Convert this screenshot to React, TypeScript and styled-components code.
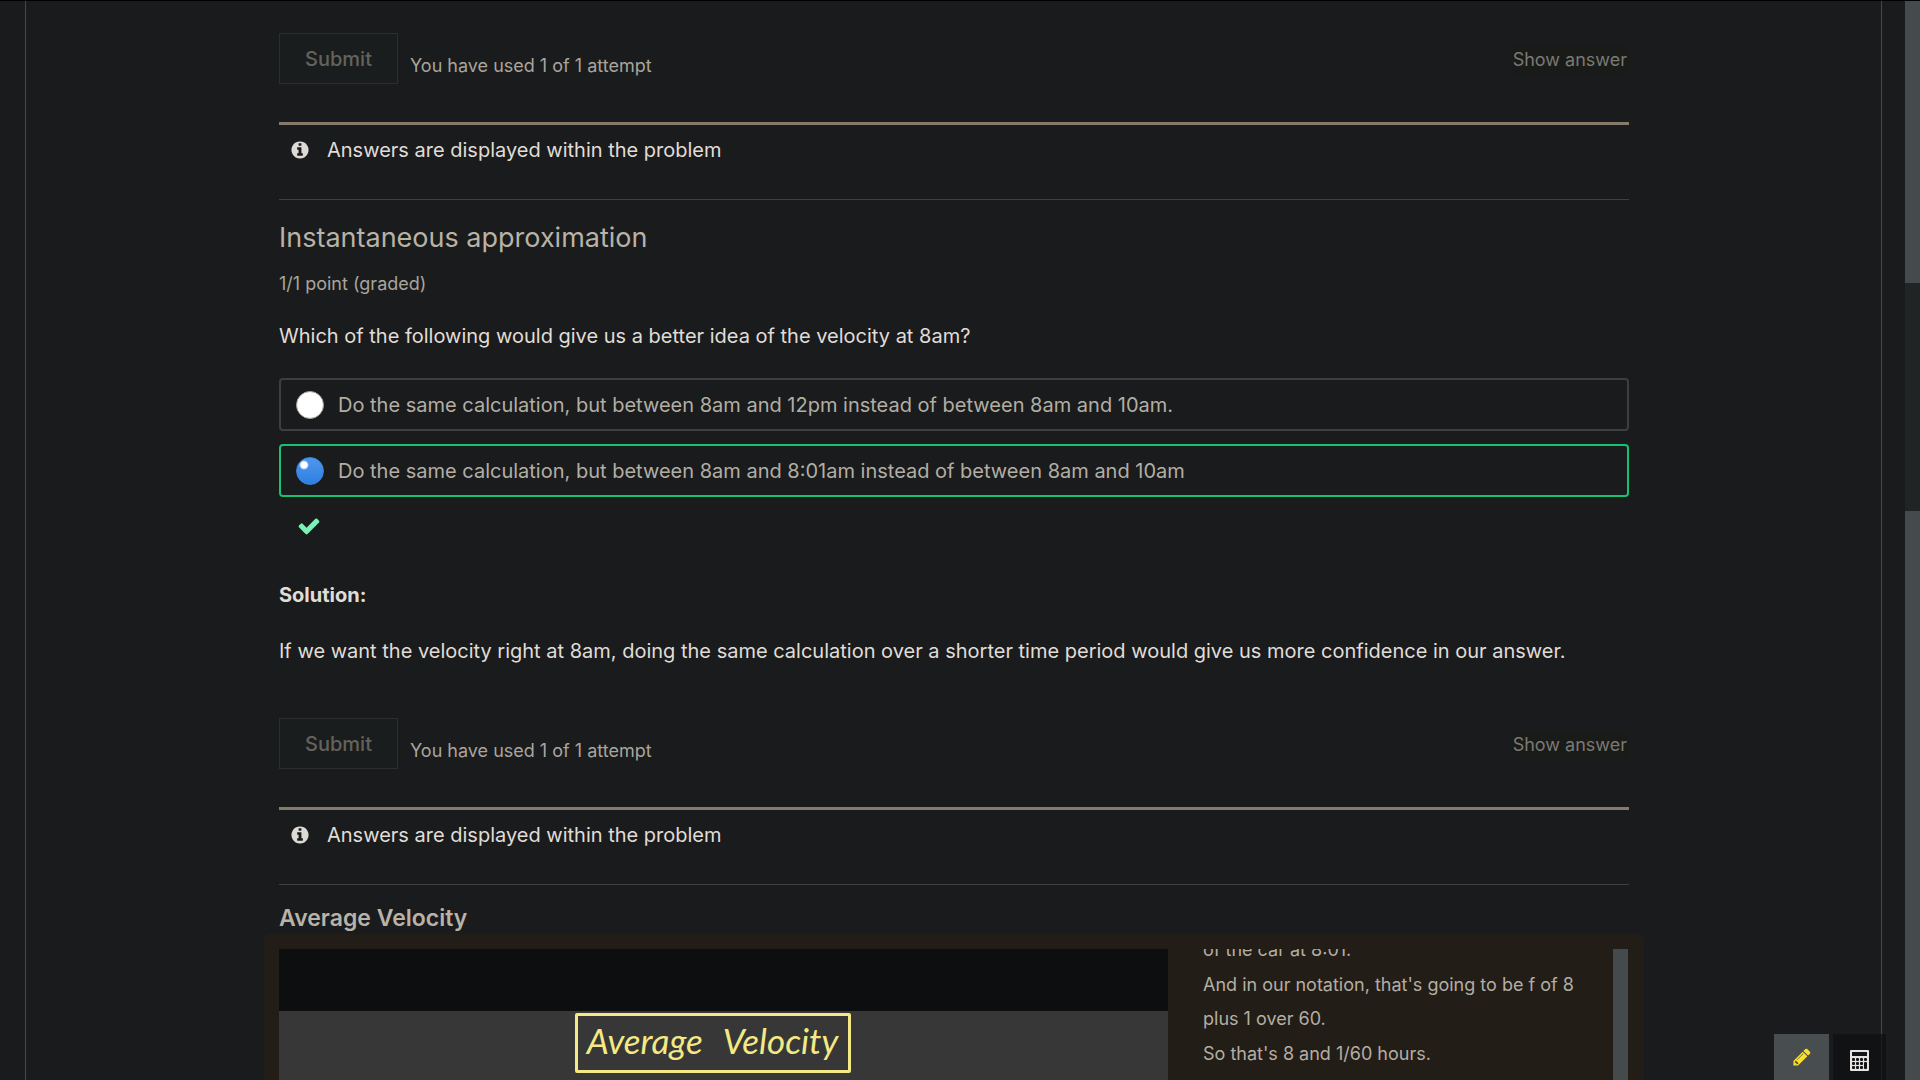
import React from "react";
import styled, { createGlobalStyle } from "styled-components";

const GlobalStyle = createGlobalStyle`
  * { box-sizing: border-box; }
  body {
    margin: 0;
    background: #1a1b1c;
    color: #e0ddd8;
    font-family: Inter, "Open Sans", sans-serif;
    font-size: 20px;
    line-height: 28px;
  }
  h2, h3, p, ul { margin: 0; padding: 0; }
  button { font-family: inherit; }
`;

const Window = styled.div`
  display: grid;
  grid-template-columns: 1fr 15px;
  height: 100vh;
  overflow: hidden;
  border-top: 1px solid #000;
`;

const Page = styled.div`
  min-height: 0;
  padding: 0 23px 0 25px;
`;

const Frame = styled.main`
  height: 100%;
  overflow: hidden;
  padding: 32px 252px 0 253px;
  border: solid #46494b;
  border-width: 0 1px;
`;

const Track = styled.div`
  display: flex;
  flex-direction: column;
  background: #454a4d;
`;

const TrackSpace = styled.div<{ $grow: number }>`
  flex: ${(p) => p.$grow} 1 0;
`;

const Thumb = styled.div`
  flex: 228 1 0;
  background: #202424;
`;

const Actions = styled.div`
  display: flex;
  align-items: flex-start;
  height: 51px;
`;

const Submit = styled.button`
  width: 119px;
  height: 51px;
  border: 1px solid #292e30;
  background: #1a1d1e;
  color: #65625c;
  font-size: 20px;
  font-weight: 500;
  line-height: 28px;
  padding: 0;
`;

const Attempts = styled.span`
  margin: 21px auto 0 12px;
  color: #a9a59d;
  font-size: 18px;
  line-height: 24px;
`;

const ShowAnswer = styled.button`
  margin-top: 13px;
  border: 0;
  padding: 0 2px;
  background: #191b19;
  color: #7b7974;
  font-size: 18px;
  font-weight: 400;
  line-height: 28px;
`;

const Notice = styled.div`
  display: flex;
  align-items: center;
  gap: 17px;
  height: 53px;
  margin-top: 38px;
  padding-left: 11px;
  border-top: 3px solid #857b6a;
`;

const Rule = styled.hr`
  height: 1px;
  margin: 24px 0 0;
  border: 0;
  background: #3e4042;
`;

const Title = styled.h2`
  padding-top: 20px;
  color: #b8b2a7;
  font-size: 27px;
  font-weight: 400;
  line-height: 36px;
`;

const Score = styled.p`
  margin-top: 16px;
  color: #a9a59d;
  font-size: 18px;
  line-height: 24px;
`;

const Choices = styled.fieldset`
  display: flex;
  flex-direction: column;
  gap: 13px;
  margin: 26px 0 0;
  padding: 0;
  border: 0;
`;

const Question = styled.legend`
  margin: 0 0 28px;
  padding: 0;
`;

const Choice = styled.label<{ $correct?: boolean }>`
  display: flex;
  align-items: center;
  gap: 14px;
  height: 53px;
  padding-left: 15px;
  border: 2px solid ${(p) => (p.$correct ? "#14c272" : "#3c3e40")};
  border-radius: 4px;
  color: #b3aea4;
`;

const Radio = styled.input`
  appearance: none;
  flex: none;
  width: 28px;
  height: 28px;
  margin: 0;
  border: 1px solid #a39e94;
  border-radius: 50%;
  background: #fff;
  &:checked {
    border-color: #3b82dd;
    background: radial-gradient(circle at 7px 7px, #fff 3px, transparent 5px),
      linear-gradient(#5097ec, #2d7fe2);
  }
`;

const Status = styled.div`
  display: flex;
  height: 24px;
  margin: 17px 0 0 18px;
`;

const SolutionTitle = styled.p`
  margin-top: 43px;
  font-weight: 700;
`;

const SolutionText = styled.p`
  margin: 28px 0 53px;
`;

const VideoTitle = styled.h3`
  padding-top: 18px;
  color: #b8b2a7;
  font-size: 23px;
  font-weight: 600;
  line-height: 31px;
`;

const Player = styled.section`
  display: grid;
  grid-template-columns: 889fr 460fr;
  height: 480px;
  margin: 0 -15px;
  padding: 15px 16px 0 15px;
  border-radius: 5px 5px 0 0;
  background: #231d17;
`;

const Video = styled.div`
  padding-top: 62px;
  background: #0c0e0f;
`;

const Still = styled.div`
  display: flex;
  justify-content: center;
  height: 100%;
  padding: 2px 0 0;
  background: #373737;
`;

const Caption = styled.div`
  display: flex;
  justify-content: center;
  gap: 20px;
  width: 276px;
  height: 60px;
  margin-right: 22px;
  border: 3px solid #f4e984;
  border-radius: 2px;
  color: #f4e984;
  font-family: Lato, sans-serif;
  font-size: 35px;
  font-style: italic;
  line-height: 48px;
`;

const Transcript = styled.div`
  display: flex;
  justify-content: space-between;
  overflow: hidden;
  padding-left: 35px;
`;

const Lines = styled.ul`
  display: flex;
  flex-direction: column;
  gap: 1px;
  width: 390px;
  margin-top: -16px;
  list-style: none;
  color: #b3aea4;
  font-size: 18px;
  line-height: 34px;
`;

const TranscriptBar = styled.div`
  width: 15px;
  background: #454a4d;
`;

const Tools = styled.div`
  position: fixed;
  right: 34px;
  bottom: 0;
  display: flex;
  gap: 4px;
`;

const Tool = styled.button<{ $active?: boolean }>`
  display: flex;
  justify-content: center;
  width: ${(p) => (p.$active ? 55 : 53)}px;
  height: 46px;
  padding: ${(p) => (p.$active ? 13 : 16)}px 0 0;
  border: 0;
  background: ${(p) => (p.$active ? "#484d50" : "rgba(15, 16, 18, 0.75)")};
`;

const INFO =
  "M1152 1376v-160q0-14-9-23t-23-9h-96v-512q0-14-9-23t-23-9h-320q-14 0-23 9t-9 23v160q0 14 9 23t23 9h96v320h-96q-14 0-23 9t-9 23v160q0 14 9 23t23 9h448q14 0 23-9t9-23zm-128-896v-160q0-14-9-23t-23-9h-192q-14 0-23 9t-9 23v160q0 14 9 23t23 9h192q14 0 23-9t9-23zm640 416q0 209-103 385.500t-279.500 279.500-385.500 103-385.500-103-279.500-279.500-103-385.500 103-385.500 279.500-279.500 385.500-103 385.500 103 279.500 279.500 103 385.500z";
const CHECK =
  "M1671 566q0 40-28 68l-724 724-136 136q-28 28-68 28t-68-28l-136-136-362-362q-28-28-28-68t28-68l136-136q28-28 68-28t68 28l294 295 656-657q28-28 68-28t68 28l136 136q28 28 28 68z";
const PENCIL =
  "M491 1536l91-91-235-235-91 91v107h128v128h107zm523-928q0-22-22-22-10 0-17 7l-542 542q-7 7-7 17 0 22 22 22 10 0 17-7l542-542q7-7 7-17zm-54-192l416 416-832 832h-416v-416zm683 96q0 53-37 90l-166 166-416-416 166-165q36-38 90-38 53 0 91 38l235 234q37 39 37 91z";

const Icon = ({ path, size, color }: { path: string; size: number; color: string }) => (
  <svg width={size} height={size} viewBox="0 0 1792 1792" fill={color} aria-hidden="true">
    <path d={path} />
  </svg>
);

const CalculatorIcon = () => (
  <svg width="19" height="21" viewBox="0 0 19 21" aria-hidden="true">
    <rect width="19" height="21" rx="1" fill="#e6e2e0" />
    <g fill="#131416">
      <rect x="2" y="2" width="15" height="4" />
      {[8, 12, 16].map((y) =>
        [2, 6, 10, 14].map((x) =>
          x === 14 && y > 8 ? null : <rect key={`${x}-${y}`} x={x} y={y} width="3" height="3" rx="1" />
        )
      )}
      <rect x="14" y="12" width="3" height="7" rx="1" />
    </g>
  </svg>
);

const ProblemFooter = () => (
  <>
    <Actions>
      <Submit disabled>Submit</Submit>
      <Attempts>You have used 1 of 1 attempt</Attempts>
      <ShowAnswer>Show answer</ShowAnswer>
    </Actions>
    <Notice>
      <Icon path={INFO} size={20} color="#dedbd6" />
      <span>Answers are displayed within the problem</span>
    </Notice>
    <Rule />
  </>
);

export default function App() {
  return (
    <>
      <GlobalStyle />
      <Window>
        <Page>
          <Frame>
            <ProblemFooter />
            <Title>Instantaneous approximation</Title>
            <Score>1/1 point (graded)</Score>
            <Choices>
              <Question>Which of the following would give us a better idea of the velocity at 8am?</Question>
              <Choice>
                <Radio type="radio" name="velocity" />
                Do the same calculation, but between 8am and 12pm instead of between 8am and 10am.
              </Choice>
              <Choice $correct>
                <Radio type="radio" name="velocity" defaultChecked />
                Do the same calculation, but between 8am and 8:01am instead of between 8am and 10am
              </Choice>
            </Choices>
            <Status role="img" aria-label="correct">
              <Icon path={CHECK} size={24} color="#7df0b8" />
            </Status>
            <SolutionTitle>Solution:</SolutionTitle>
            <SolutionText>
              If we want the velocity right at 8am, doing the same calculation over a shorter time period would give us
              more confidence in our answer.
            </SolutionText>
            <ProblemFooter />
            <VideoTitle>Average Velocity</VideoTitle>
            <Player>
              <Video>
                <Still>
                  <Caption>
                    <span>Average</span>
                    <span>Velocity</span>
                  </Caption>
                </Still>
              </Video>
              <Transcript>
                <Lines>
                  <li>of the car at 8:01.</li>
                  <li>And in our notation, that's going to be f of 8 plus 1 over 60.</li>
                  <li>So that's 8 and 1/60 hours.</li>
                </Lines>
                <TranscriptBar />
              </Transcript>
            </Player>
          </Frame>
        </Page>
        <Track>
          <TrackSpace $grow={282} />
          <Thumb />
          <TrackSpace $grow={569} />
        </Track>
      </Window>
      <Tools>
        <Tool $active aria-label="Highlight">
          <Icon path={PENCIL} size={20} color="#fbdf2e" />
        </Tool>
        <Tool aria-label="Open calculator">
          <CalculatorIcon />
        </Tool>
      </Tools>
    </>
  );
}
